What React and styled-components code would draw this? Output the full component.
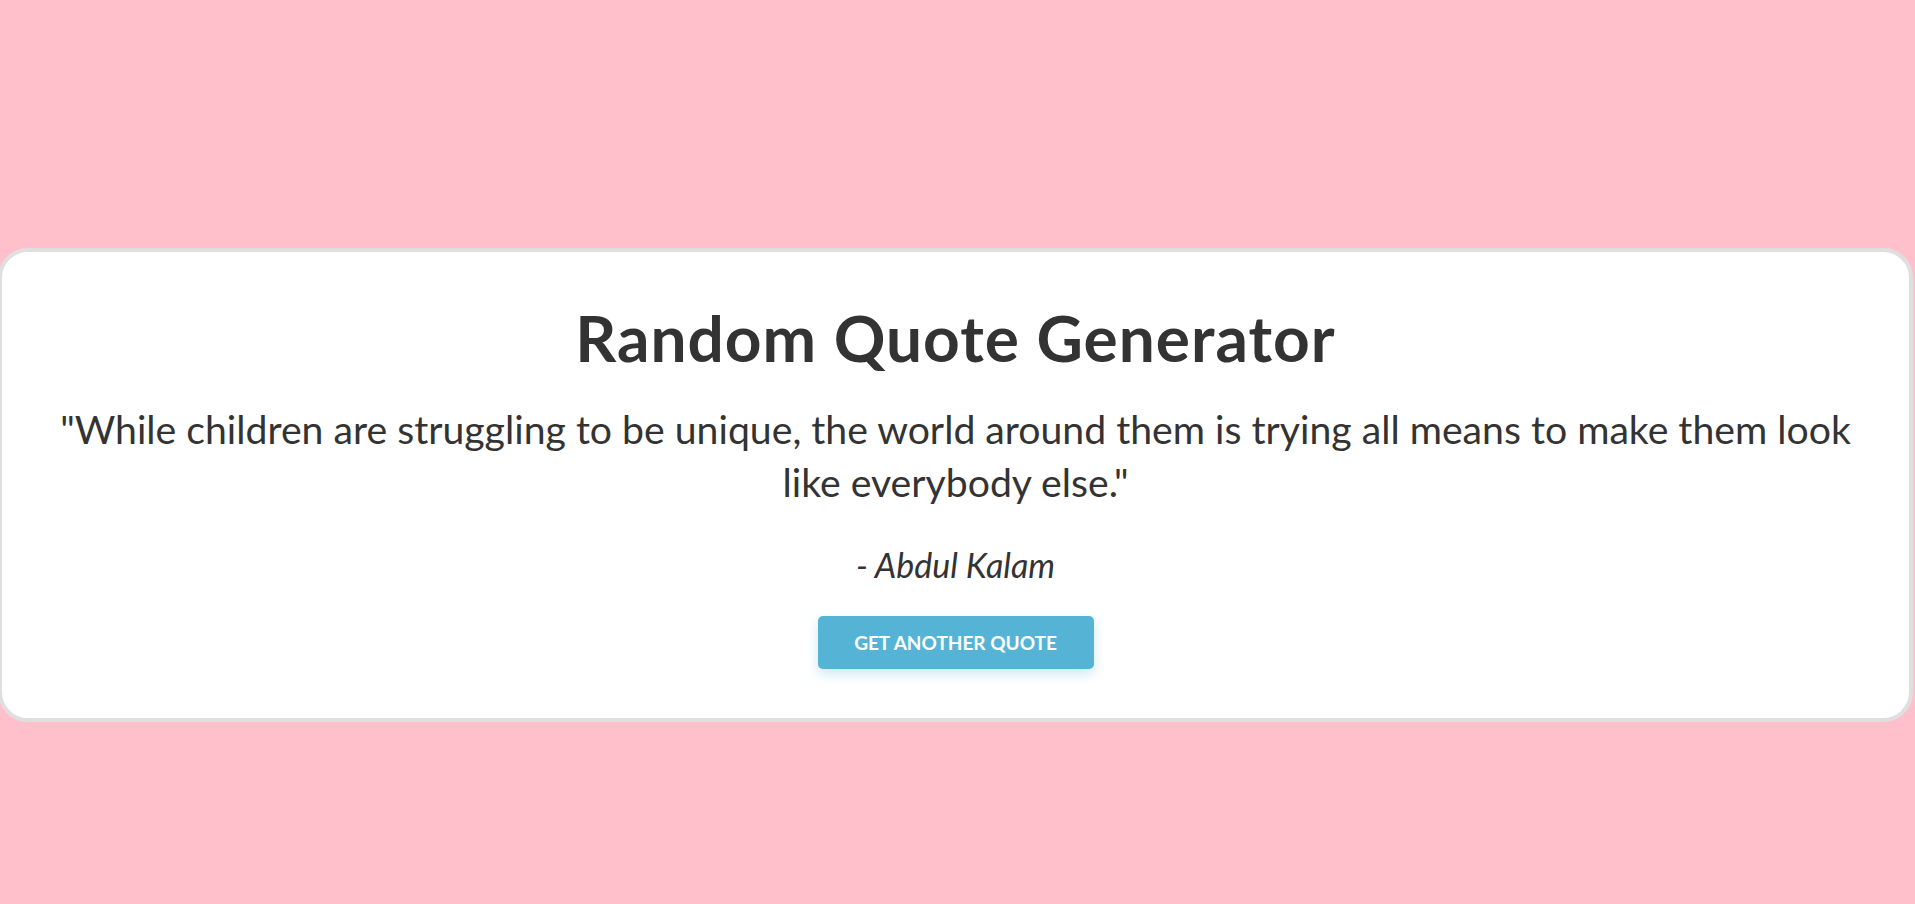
import styled, { createGlobalStyle } from 'styled-components'

const GlobalStyle = createGlobalStyle`
  html, body {
    margin: 0;
    padding: 0;
  }
  body {
    background-color: pink;
    font-family: Lato, "Open Sans", sans-serif;
    color: #333;
  }
`

const Page = styled.div`
  min-height: 904px;
  padding-top: 248px;
  box-sizing: border-box;
`

const Card = styled.div`
  display: flex;
  flex-direction: column;
  align-items: center;
  margin: 0 2px 0 -2px;
  padding: 47px 40px 49px;
  background-color: #fff;
  border: 4px solid #dfdfdf;
  border-radius: 30px;
  text-align: center;
`

const Title = styled.h1`
  margin: 0;
  font-size: 64px;
  font-weight: 700;
  line-height: 78px;
  letter-spacing: 1px;
`

const Quote = styled.p`
  margin: 25px 0 0;
  max-width: 1820px;
  font-size: 39.2px;
  font-weight: 400;
  line-height: 53px;
`

const Author = styled.p`
  margin: 34px 0 0;
  font-size: 34px;
  font-style: italic;
  line-height: 45px;
`

const Button = styled.button`
  margin-top: 29px;
  width: 276px;
  height: 53px;
  border: none;
  border-radius: 5px;
  background-color: #55b4d6;
  color: #fff;
  font-family: Lato, sans-serif;
  font-size: 19px;
  font-weight: 700;
  text-transform: uppercase;
  box-shadow: 0 5px 12px rgba(85, 180, 214, 0.3);
  cursor: pointer;
`

export default function App() {
  return (
    <>
      <GlobalStyle />
      <Page>
        <Card>
          <Title>Random Quote Generator</Title>
          <Quote>
            "While children are struggling to be unique, the world around them is trying all means to make them look like everybody else."
          </Quote>
          <Author>- Abdul Kalam</Author>
          <Button>Get another quote</Button>
        </Card>
      </Page>
    </>
  )
}
